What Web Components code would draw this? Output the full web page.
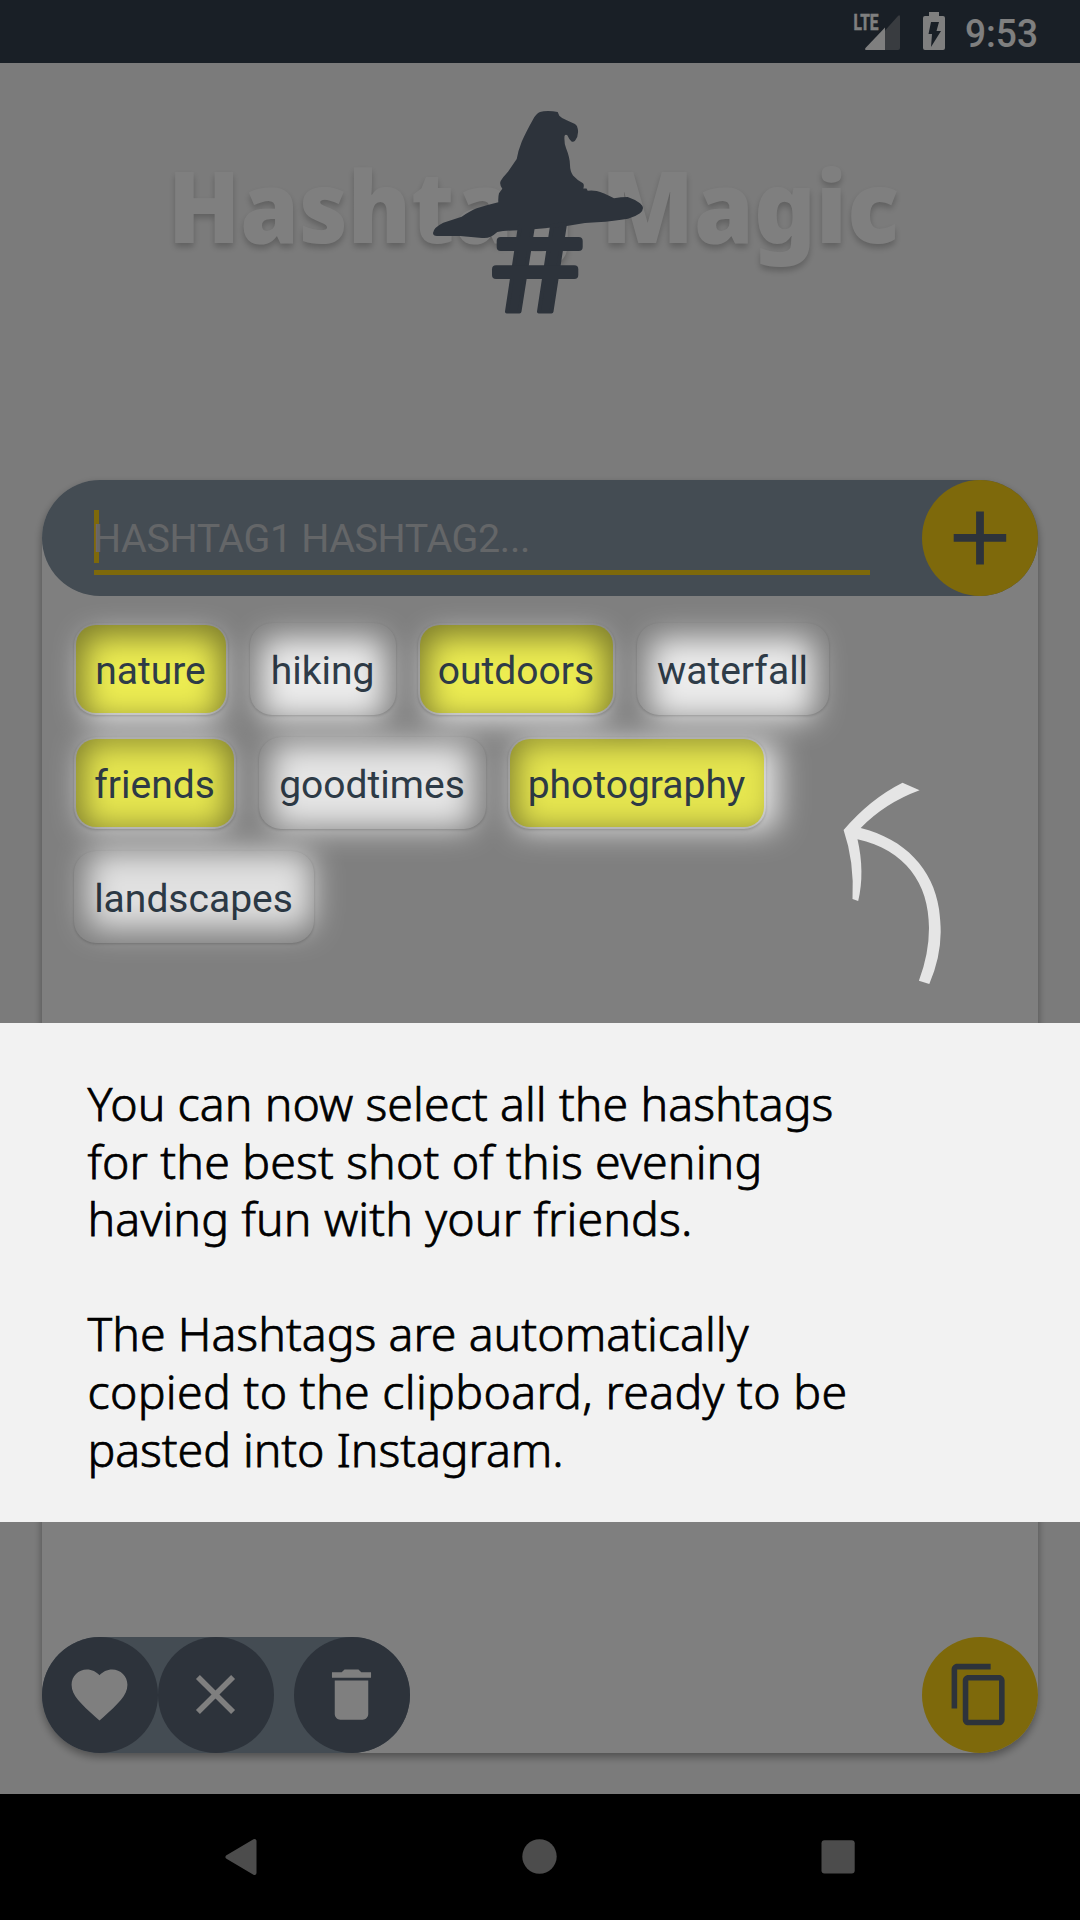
<!DOCTYPE html>
<html lang="en"><head><meta charset="utf-8"><title>Hashtag Magic</title>
<style>html,body{margin:0;padding:0}body{width:1080px;height:1920px;overflow:hidden;font-family:Roboto,sans-serif}</style></head>
<body>
<hm-app>
  <hm-status slot="status"></hm-status>
  <hm-logo slot="logo"></hm-logo>
  <hm-card slot="card">
    <hm-chip on style="width:154px">nature</hm-chip><hm-chip style="width:146px">hiking</hm-chip><hm-chip on style="width:197px">outdoors</hm-chip><hm-chip style="width:192px">waterfall</hm-chip>
    <hm-chip on style="width:162px">friends</hm-chip><hm-chip style="width:227px;margin-left:1px">goodtimes</hm-chip><hm-chip on style="width:258px">photography</hm-chip>
    <hm-chip style="width:240px">landscapes</hm-chip>
  </hm-card>
  <hm-nav slot="nav"></hm-nav>
  <hm-spotlight slot="over"></hm-spotlight>
  <hm-note slot="over">
    <hm-line width="746">You can now select all the hashtags</hm-line>
    <hm-line width="675">for the best shot of this evening</hm-line>
    <hm-line width="605">having fun with your friends.</hm-line>
    <hm-line></hm-line>
    <hm-line width="661">The Hashtags are automatically</hm-line>
    <hm-line width="760">copied to the clipboard, ready to be</hm-line>
    <hm-line width="476">pasted into Instagram.</hm-line>
  </hm-note>
</hm-app>
<script>
const make=(name,html,ready)=>customElements.define(name,class extends HTMLElement{
  constructor(){super();this.attachShadow({mode:'open'}).innerHTML=html}
  connectedCallback(){if(ready)ready.call(this)}
});

make('hm-app',`<style>:host{display:flex;flex-direction:column;position:relative;width:1080px;height:1920px;background:#f7f7f7;overflow:hidden}</style>
<slot name="status"></slot><slot name="logo"></slot><slot name="card"></slot><slot name="nav"></slot><slot name="over"></slot>`);

make('hm-status',`<style>:host{display:block;height:63px;background:#323e4c}svg{display:block}</style>
<svg width="1080" height="63" fill="#fff" font-family="Roboto,sans-serif">
<text x="853.5" y="30" font-size="22.500" font-weight="700" textLength="25" lengthAdjust="spacingAndGlyphs" stroke="#fff" stroke-width=".5">LTE</text>
<path d="M885 30.500 898 16q2-2 2 1v31q0 2-2 2H885z" fill="#727880"/><path d="M885 27.500V50H867q-3 0-1.500-2z"/>
<path d="M929 12h10v4h4q2 0 2 2v30q0 2-2 2h-18q-2 0-2-2V18q0-2 2-2h4z"/><path d="M931 22h8l-2.500 9h4.500l-10 16 1-13h-3.500z" fill="#323e4c"/>
<text x="965" y="46.500" font-size="38" font-weight="500" textLength="73" lengthAdjust="spacingAndGlyphs">9:53</text></svg>`);

make('hm-logo',`<style>:host{display:block;height:417px}svg{display:block;overflow:visible}.t{filter:drop-shadow(0 4px 3px rgba(0,0,0,.22))}</style>
<svg width="1080" height="417" viewBox="0 63 1080 417">
<g class="t" font-family="'Noto Sans','Open Sans',sans-serif" font-weight="900" font-size="99" fill="#fff">
<text x="168" y="242.500" textLength="406" lengthAdjust="spacingAndGlyphs">Hashtag</text><text x="601" y="242.500" textLength="298" lengthAdjust="spacingAndGlyphs">Magic</text></g>
<g fill="#5a6676">
<path d="M540 112Q543 111 548 111Q553 111 557.700 112L559.300 115.700Q562 118.500 566.700 120.300L575 124Q577.500 125.500 577.800 129Q579 136 575 140.700Q573.500 142.500 571.500 141.500L569.300 139 567.300 135.300Q565.500 134 564.500 136Q564 143 566 148Q570 158 570 165Q570 171 573 175.500Q577 180 583 183.300Q584.500 185 583.300 188.500L586.500 188.500 587.700 190.700Q592 190 596.700 191Q603 192.500 614 198.300Q621 197 627.700 197Q634 199 640 203.300Q643 206 643 208Q643 210.500 640 213.300Q635 217 628 218.700Q615 221 596.700 222.300L585 223 566.700 226 534 229.300 518 230.300Q505 230.500 497.300 232Q494 235 490.700 236.700Q487 238.500 482 238L460 236 437 236Q433 236 433 233Q433.500 227.500 443.300 222.700L461.700 216.700Q470 211 476.700 208.300Q487 205 498.300 202.300Q498 197 499 193.300L502.300 188.700Q499 184 500.800 180.700Q503 177 508 171.700L516.700 159Q518 151 521.700 141.700Q526 132 533 119.500Q536 113.500 540 112Z"/>
<path stroke="#5a6676" stroke-width="4" stroke-linejoin="round" d="M520 226 507 311.500H519.500L533 226zM552 226 539 311.500H551.500L565 224z"/>
<rect x="496.700" y="237" width="86" height="14" rx="4"/><rect x="492" y="265.300" width="86.300" height="13.700" rx="4"/></g></svg>`);

make('hm-chip',`<style>:host{box-sizing:border-box;display:flex;align-items:center;justify-content:center;height:92.500px;border-radius:22px;background:#fff;box-shadow:0 1px 3px rgba(0,0,0,.22);font:39px/46px Roboto,sans-serif;color:#33424f;padding:2.500px 2px}
:host([on])>span{background:#ffff58}span{display:flex;align-items:center;justify-content:center;white-space:nowrap;width:100%;height:100%;border-radius:20px;box-sizing:border-box;padding:4px 1px 0 0}</style><span><slot></slot></span>`);

make('hm-card',`<style>
:host{display:flex;flex-direction:column;box-sizing:border-box;width:996px;height:1273px;margin:0 42px 41px;background:#fff;border-radius:58px;box-shadow:0 4px 9px rgba(0,0,0,.36)}
header{display:flex;align-items:center;height:116px;border-radius:58px;background:#8898a6;justify-content:space-between}
.field{margin-left:52px;width:776px;height:64px;border-bottom:5px solid #fcd216;display:flex;align-items:flex-start;box-sizing:border-box;margin-top:9px}
.caret{width:5px;height:53px;background:#fcd216;margin-top:-1px}
.hint{font:39.400px/53px Roboto,sans-serif;letter-spacing:-.350px;color:#c8ccd0;margin-left:-6px;white-space:nowrap;padding-top:1px}
.b{width:116px;height:116px;border-radius:50%;display:flex;align-items:center;justify-content:center;background:#5a6676;fill:#fff}
.g{background:#fcd216;fill:#5a6676}
.chips{display:flex;flex-wrap:wrap;gap:21.500px 22px;padding:26.500px 60px 0 32px;flex:1;align-content:flex-start}
footer{display:flex;justify-content:space-between;height:116px}
.pill{display:flex;width:368px;border-radius:58px;background:#8898a6}.pill .b:last-child{margin-left:20px}
svg{display:block;margin:0 1px 1px 0}</style>
<header><div class="field"><i class="caret"></i><span class="hint">HASHTAG1 HASHTAG2...</span></div>
<div class="b g"><svg width="54" height="54" viewBox="0 0 54 54"><path d="M23.100 0.500h7.800V23H53.200v7.800H30.900V53.500h-7.800V30.800H.7V23h22.400z"/></svg></div></header>
<div class="chips"><slot></slot></div>
<footer><div class="pill">
<div class="b"><svg width="67" height="67" viewBox="0 0 24 24"><path d="M12 21.350l-1.450-1.320C5.400 15.360 2 12.280 2 8.500 2 5.420 4.420 3 7.500 3c1.740 0 3.410.81 4.500 2.090C13.090 3.810 14.760 3 16.500 3 19.580 3 22 5.420 22 8.500c0 3.780-3.400 6.860-8.550 11.540z"/></svg></div>
<div class="b"><svg width="67" height="67" viewBox="0 0 24 24"><path d="M19 6.410 17.590 5 12 10.590 6.410 5 5 6.410 10.590 12 5 17.590 6.410 19 12 13.410 17.590 19 19 17.590 13.410 12z"/></svg></div>
<div class="b"><svg width="67" height="67" viewBox="0 0 24 24"><path d="M6 19c0 1.100.9 2 2 2h8c1.100 0 2-.9 2-2V7H6zM19 4h-3.500l-1-1h-5l-1 1H5v2h14z"/></svg></div></div>
<div class="b g"><svg width="67" height="67" viewBox="0 0 24 24"><path d="M16 1H4c-1.100 0-2 .9-2 2v14h2V3h12zm3 4H8c-1.100 0-2 .9-2 2v14c0 1.100.9 2 2 2h11c1.100 0 2-.9 2-2V7c0-1.100-.9-2-2-2zm0 16H8V7h11z"/></svg></div></footer>`);

make('hm-nav',`<style>:host{display:block;height:126px;background:#000}svg{display:block}</style>
<svg width="1080" height="126" fill="#989898"><path stroke="#989898" stroke-width="4" stroke-linejoin="round" d="M227.500 63 254.500 47V79z"/><circle cx="539.500" cy="62.500" r="17.200"/><rect x="821.500" y="46.300" width="33.200" height="33.200" rx="3"/></svg>`);

/* Tutorial scrim: soft openings over the chips, plus the pointer arrow */
make('hm-spotlight',`<style>:host{position:absolute;inset:0}svg{display:block}</style>
<svg width="1080" height="1920"><defs><filter id="f" x="-50%" y="-80%" width="200%" height="260%" color-interpolation-filters="sRGB"><feGaussianBlur stdDeviation="15.500"/></filter>
<mask id="m" maskUnits="userSpaceOnUse" x="0" y="0" width="1080" height="1920"><rect width="1080" height="1920" fill="#fff"/>
<g fill="#000" opacity=".85">
<rect filter="url(#f)" x="85" y="637" width="134" height="83" rx="12"/><rect filter="url(#f)" x="261" y="638" width="124" height="81" rx="12"/><rect filter="url(#f)" x="428" y="637" width="176" height="83" rx="12"/><rect filter="url(#f)" x="650" y="638" width="164" height="81" rx="12"/></g>
<g fill="#000" opacity=".8">
<rect filter="url(#f)" x="83" y="743" width="144" height="85" rx="12"/><rect filter="url(#f)" x="271" y="744" width="202" height="84" rx="12"/><rect filter="url(#f)" x="516" y="742" width="262" height="88" rx="12"/></g>
<g fill="#000" opacity=".76"><rect filter="url(#f)" x="88" y="852" width="224" height="77" rx="12"/></g></mask></defs>
<rect width="1080" height="1920" fill="#000" fill-opacity=".5" mask="url(#m)"/>
<path fill="#e5e5e5" d="M902.500 782.700 919.600 790.300Q885 803 860.700 828C905 839 933 869 939 909Q940.700 922 940.700 932Q940.500 958 929.300 984L918.900 980.700Q929 954 929 928C929 883 905 850 857.500 839.300Q865 872 858.200 901L852.500 899Q854.500 862 843.600 830Q870 799 902.500 782.700Z"/></svg>`);

make('hm-note',`<style>:host{position:absolute;left:0;right:0;top:1023px;height:499px;box-sizing:border-box;padding:52px 88px 0 87.500px;background:rgba(243,243,243,.992);display:flex;flex-direction:column}</style><slot></slot>`);

/* A line whose tracking is adjusted to reach a given width */
make('hm-line',`<style>:host{display:block;flex:none;height:57.600px;font:300 46.500px/57.600px 'Noto Sans',sans-serif;-webkit-text-stroke:.75px #000;color:#000;white-space:nowrap}</style><span><slot></slot></span>`,function(){
  const w=+this.getAttribute('width'),s=this.shadowRoot.querySelector('span');
  if(!w)return;
  s.style.letterSpacing=(w-s.getBoundingClientRect().width)/this.textContent.length+'px';
});
</script>
</body></html>
